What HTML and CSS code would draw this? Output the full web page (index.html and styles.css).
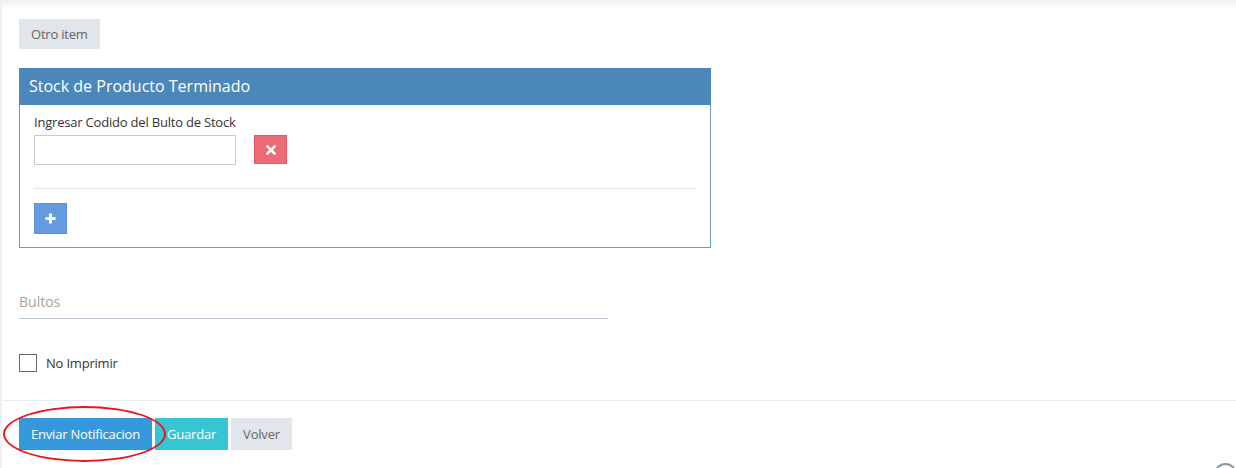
FILE: index.html
```html
<!DOCTYPE html>
<html lang="es">
<head>
  <meta charset="UTF-8">
  <title>Stock de Producto Terminado</title>
  <link rel="stylesheet" href="styles.css">
</head>
<body>

<div class="page">
  <div class="form-body">
    <button class="btn btn-default">Otro item</button>

    <div class="panel">
      <div class="panel-heading">Stock de Producto Terminado</div>
      <div class="panel-body">
        <label for="codigo">Ingresar Codido del Bulto de Stock</label>
        <div class="row">
          <input type="text" id="codigo" class="form-control" />
          <button class="btn btn-icon btn-danger" title="Quitar">
            <svg width="10" height="10" viewBox="0 0 10 10"><path d="M1.5 1.5 L8.5 8.5 M8.5 1.5 L1.5 8.5" stroke="#fff" stroke-width="2.6" stroke-linecap="square"/></svg>
          </button>
        </div>
        <hr />
        <button class="btn btn-icon btn-primary" title="Agregar">
          <svg width="11" height="11" viewBox="0 0 11 11"><path d="M5.5 0.5 V10.5 M0.5 5.5 H10.5" stroke="#fff" stroke-width="3"/></svg>
        </button>
      </div>
    </div>

    <div class="line-input">
      <input type="text" placeholder="Bultos" />
    </div>

    <label class="check">
      <input type="checkbox" />
      <span class="box"></span>
      No Imprimir
    </label>
  </div>

  <div class="form-actions">
    <span class="marked">
      <button class="btn btn-blue">Enviar Notificacion</button>
      <span class="ellipse"></span>
    </span>
    <button class="btn btn-green">Guardar</button>
    <button class="btn btn-default">Volver</button>
  </div>
</div>

<a class="go-top" href="#"></a>

</body>
</html>
```

FILE: styles.css
```css
html {
  overflow: hidden;
}
body {
  margin: 0;
  background: #fff;
  color: #333;
  font-family: 'Open Sans', 'Liberation Sans', sans-serif;
  font-size: 13px;
  letter-spacing: -0.2px;
}
.page {
  border-left: 2px solid #eef1f5;
  background: linear-gradient(#efefef, #fff 9px);
  min-height: 468px;
  box-sizing: border-box;
}
.form-body {
  padding: 19px 17px 0 17px;
}
.btn {
  font-family: inherit;
  font-size: 13px;
  letter-spacing: -0.2px;
  border: none;
  border-radius: 0;
  padding: 0 12px;
  height: 30px;
  line-height: 30px;
  cursor: pointer;
  color: #fff;
}
.btn-default {
  background: #e1e5ec;
  color: #666;
}
.btn-blue {
  background: #3598dc;
  height: 32px;
}
.btn-green {
  background: #36c6d3;
  height: 32px;
}
.form-actions .btn-default {
  height: 32px;
}
.btn-icon {
  width: 33px;
  padding: 0;
  display: flex;
  align-items: center;
  justify-content: center;
}
.btn-danger {
  background: #ed6b75;
  border: 1px solid #ea5460;
  height: 29px;
}
.btn-primary {
  background: #659be0;
  border: 1px solid #5a90dc;
  height: 31px;
}
.panel {
  margin-top: 19px;
  width: 692px;
  box-sizing: border-box;
  border: 1px solid #6b9bc4;
}
.panel-heading {
  background: #4b88b9;
  color: #fff;
  font-size: 16px;
  letter-spacing: 0;
  height: 37px;
  line-height: 37px;
  padding: 0 10px;
  margin: -1px -1px 0 -1px;
}
.panel-body {
  padding: 8px 14px 13px 14px;
}
.panel-body label {
  display: block;
  line-height: 19px;
  margin-bottom: 3px;
}
.row {
  display: flex;
  align-items: flex-start;
  gap: 18px;
}
.form-control {
  width: 202px;
  height: 30px;
  box-sizing: border-box;
  border: 1px solid #c2cad8;
  font-family: inherit;
  font-size: 14px;
  padding: 6px 12px;
  outline: none;
}
hr {
  border: none;
  border-top: 1px solid #e2e2e2;
  margin: 23px 0 14px 0;
}
.line-input {
  margin-top: 37px;
  width: 589px;
}
.line-input input {
  width: 100%;
  height: 34px;
  box-sizing: border-box;
  border: none;
  border-bottom: 1px solid #c2cad8;
  padding: 0;
  font-family: inherit;
  font-size: 14px;
  color: #333;
  outline: none;
}
.line-input input::placeholder {
  color: #a8a29e;
}
.check {
  display: flex;
  align-items: center;
  gap: 9px;
  margin-top: 35px;
  height: 18px;
  cursor: pointer;
}
.check input {
  display: none;
}
.check .box {
  width: 18px;
  height: 18px;
  box-sizing: border-box;
  border: 1px solid #666;
}
.form-actions {
  margin-top: 28px;
  border-top: 1px solid #e7ecf1;
  padding: 17px 17px 0 17px;
  display: flex;
  gap: 3px;
}
.marked {
  position: relative;
  display: flex;
}
.ellipse {
  position: absolute;
  left: -16px;
  top: -12px;
  width: 163px;
  height: 56px;
  box-sizing: border-box;
  border: 2px solid #e8141e;
  border-radius: 50%;
  pointer-events: none;
}
.go-top {
  position: fixed;
  right: -1px;
  bottom: -18px;
  width: 23px;
  height: 23px;
  box-sizing: border-box;
  border: 2px solid #8896a9;
  border-radius: 50%;
}
```
